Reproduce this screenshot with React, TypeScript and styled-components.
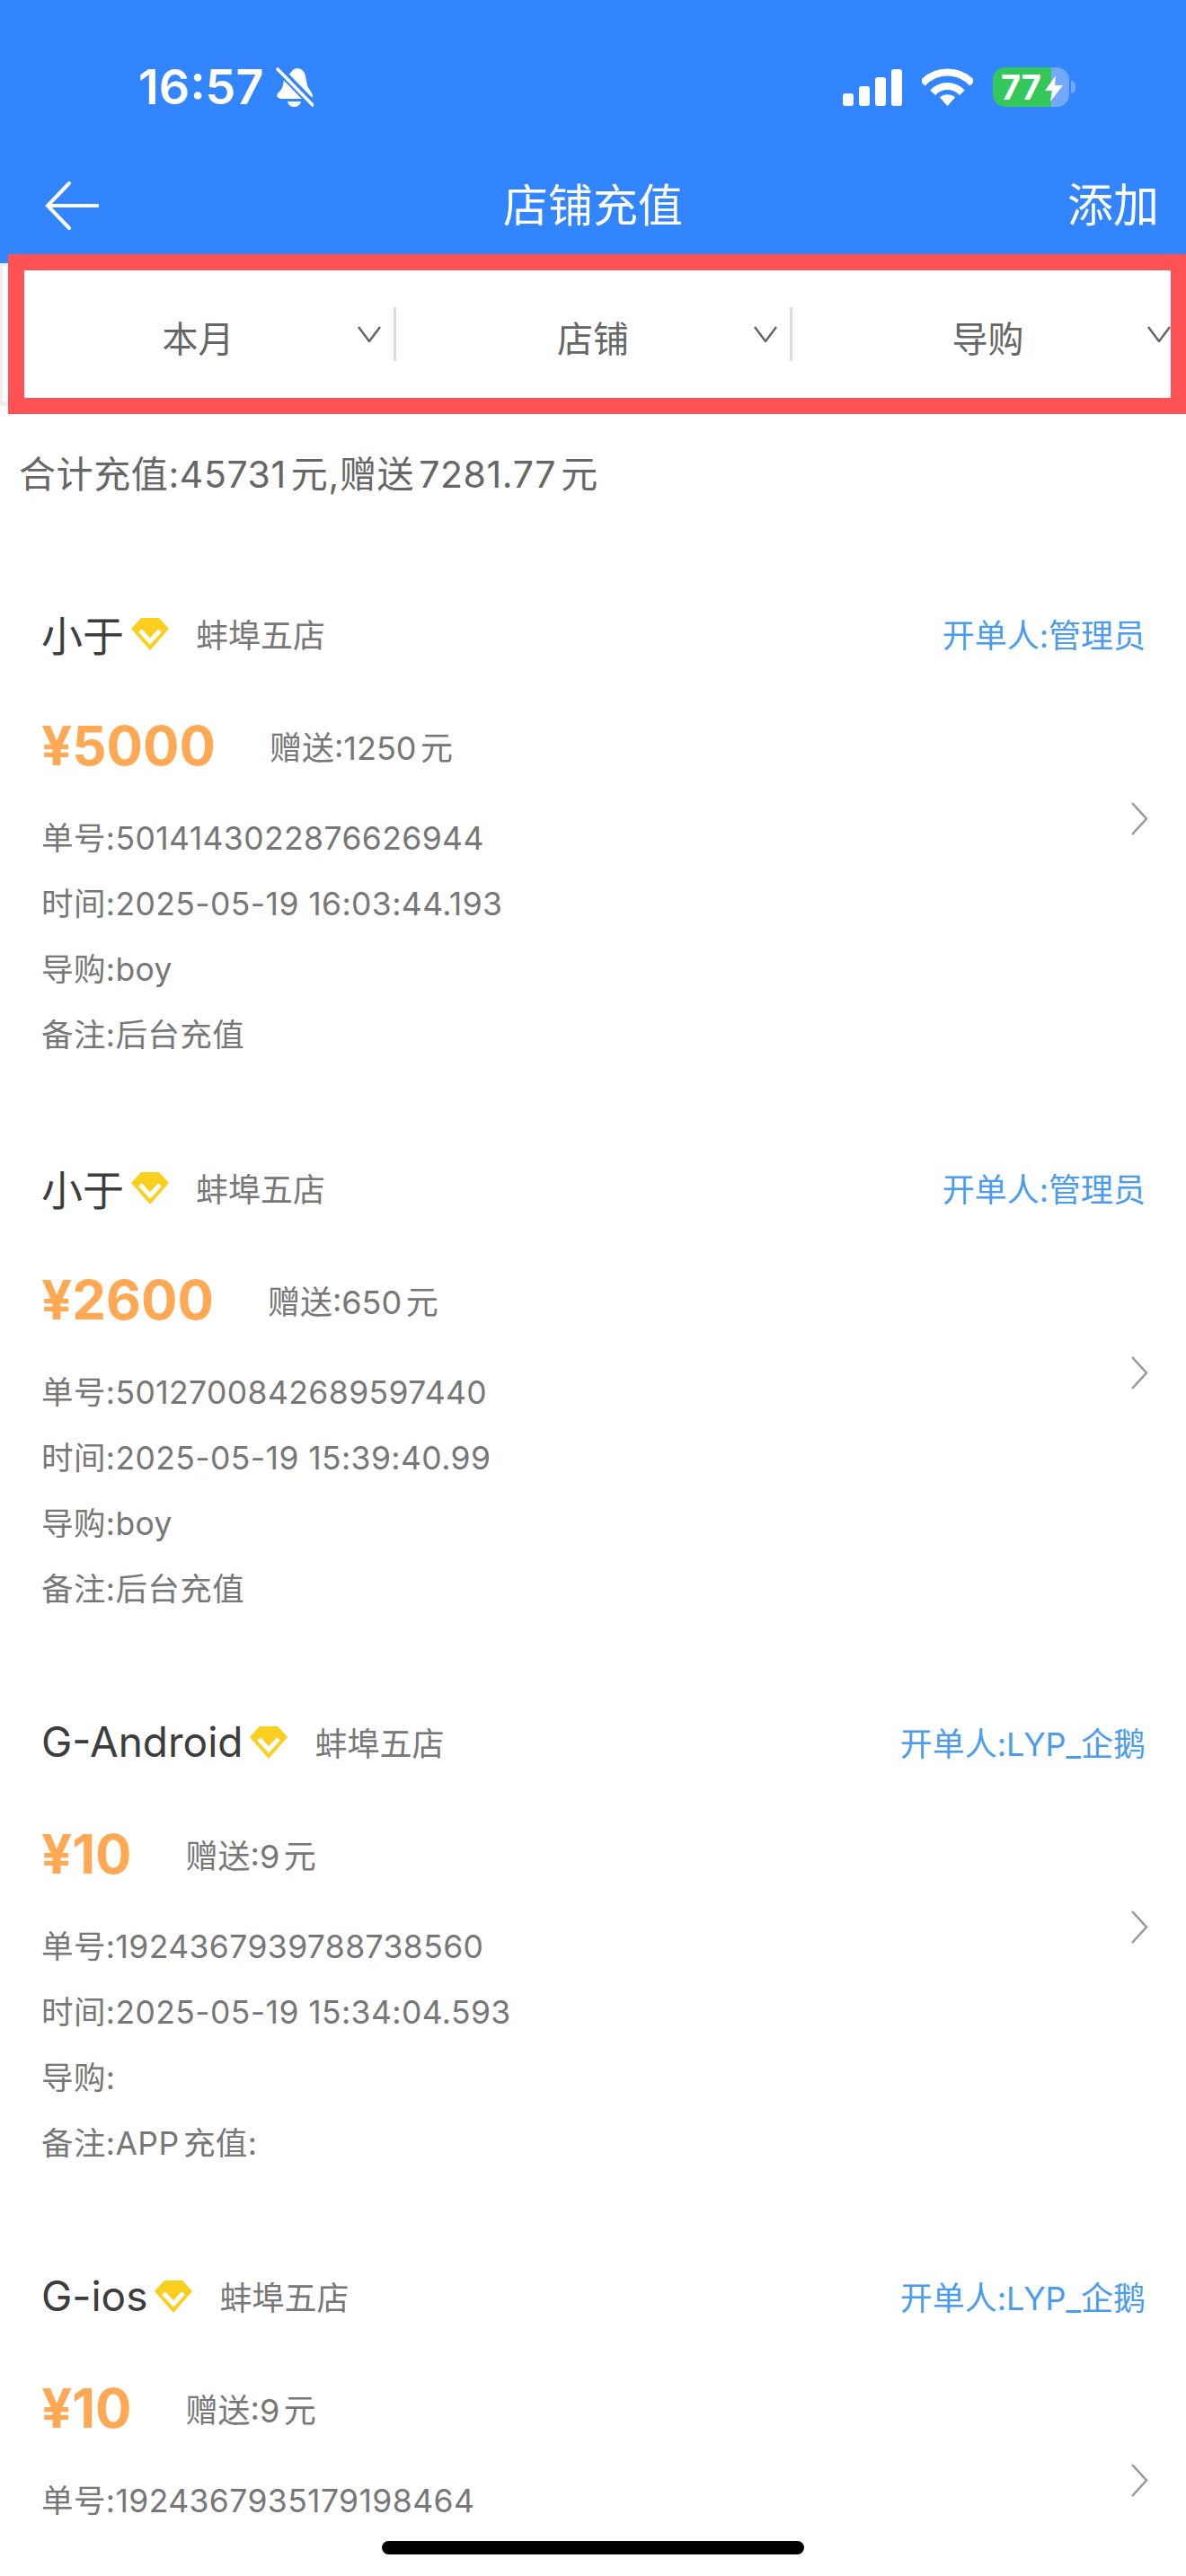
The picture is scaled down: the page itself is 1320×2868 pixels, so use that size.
import React from 'react';
import styled, { createGlobalStyle } from 'styled-components';

const GlobalStyle = createGlobalStyle`
  html, body {
    margin: 0;
    padding: 0;
    background: #fff;
  }
  body {
    font-family: Inter, "Noto Sans CJK SC", sans-serif;
    text-autospace: normal;
  }
`;

const Screen = styled.div`
  position: relative;
  width: 1320px;
  height: 2868px;
  overflow: hidden;
  background: #fff;
`;

const Header = styled.header`
  background: #3385ff;
  color: #fff;
  height: 293px;
`;

const StatusBar = styled.div`
  height: 194px;
  padding: 0 130px 0 154px;
  display: flex;
  align-items: center;
  justify-content: space-between;
`;

const StatusLeft = styled.div`
  display: flex;
  align-items: center;
  gap: 13px;
`;

const Clock = styled.span`
  font-size: 54px;
  font-weight: 600;
  line-height: 60px;
`;

const StatusRight = styled.div`
  display: flex;
  align-items: center;
  gap: 22px;
`;

const Signal = styled.div`
  display: flex;
  align-items: flex-end;
  gap: 6px;
  height: 41px;
`;

const SignalBar = styled.span<{ $h: number }>`
  width: 12px;
  height: ${(p) => p.$h}px;
  border-radius: 3px;
  background: #fff;
`;

const Battery = styled.div`
  position: relative;
  width: 85px;
  height: 44px;
  border-radius: 14px;
  background: linear-gradient(to right, #34c759 76.5%, #73a8ff 76.5%);
  display: flex;
  align-items: center;
  padding-left: 9px;
  box-sizing: border-box;
  font-size: 38px;
  font-weight: 700;
  line-height: 44px;

  &::after {
    content: '';
    position: absolute;
    right: -7px;
    top: 15px;
    width: 5px;
    height: 14px;
    border-radius: 0 5px 5px 0;
    background: #73a8ff;
  }
`;

const BatteryBolt = styled.svg`
  position: absolute;
  left: 58px;
  top: 9px;
`;

const Nav = styled.div`
  height: 70px;
  padding: 0 32px;
  display: grid;
  grid-template-columns: 1fr auto 1fr;
  align-items: center;
`;

const BackButton = styled.svg`
  margin-left: 17px;
  display: block;
`;

const Title = styled.div`
  font-size: 50px;
  line-height: 70px;
`;

const AddButton = styled.div`
  font-size: 51px;
  line-height: 70px;
  justify-self: end;
  margin-right: -2px;
`;

const FilterBar = styled.div`
  position: relative;
  height: 159px;
  box-sizing: border-box;
  border: 3px solid #eee;
  border-bottom-width: 5px;
  display: grid;
  grid-template-columns: 438px 441px 1fr;
  align-items: center;
`;

const HighlightFrame = styled.div`
  position: absolute;
  top: -13px;
  left: 6px;
  right: -3px;
  bottom: -14px;
  border: 18px solid #ff5254;
  border-right-width: 17px;
  box-sizing: border-box;
`;

const FilterCell = styled.div<{ $divider?: boolean }>`
  position: relative;
  height: 60px;
  display: flex;
  align-items: center;
  justify-content: center;
  border-right: ${(p) => (p.$divider ? '3px solid #dcdcdc' : 'none')};
  box-sizing: border-box;
  color: #666;
  font-size: 40px;
  line-height: 60px;
`;

const FilterLabel = styled.span`
  position: relative;
  top: 6px;
`;

const FilterChevron = styled.svg`
  position: absolute;
  right: 14px;
  top: 21px;
`;

const Total = styled.div`
  height: 152px;
  box-sizing: border-box;
  padding: 0 0 6px 21px;
  display: flex;
  align-items: center;
  color: #666;
  font-size: 41px;
  letter-spacing: 0.6px;
`;

const Card = styled.article`
  display: grid;
  height: 617px;
  box-sizing: border-box;
  padding: 71px 45px 33px 46px;
`;

const CardBody = styled.div`
  grid-area: 1 / 1;
`;

const CardArrow = styled.svg`
  grid-area: 1 / 1;
  justify-self: end;
  align-self: center;
  margin: 0 -3px 42px 0;
`;

const NameRow = styled.div`
  display: flex;
  align-items: center;
  height: 60px;
`;

const Name = styled.span`
  color: #3d3d3d;
  font-size: 46px;
`;

const Diamond = styled.svg`
  margin: 2px 0 0 8px;
  flex: none;
`;

const Store = styled.span`
  margin-left: 30px;
  color: #777;
  font-size: 36px;
`;

const Operator = styled.span`
  margin-left: auto;
  color: #4a9cf0;
  font-size: 36px;
`;

const PriceRow = styled.div`
  display: flex;
  align-items: center;
  height: 80px;
  margin-top: 55px;
`;

const Price = styled.span`
  color: #ffa955;
  font-size: 60px;
  font-weight: 700;
`;

const Gift = styled.span`
  margin-left: 60px;
  color: #777;
  font-size: 36px;
`;

const Details = styled.div`
  margin-top: 27px;
`;

const DetailLine = styled.div`
  height: 73px;
  line-height: 73px;
  color: #777;
  font-size: 35.5px;
  letter-spacing: 0.4px;
`;

const HomeIndicator = styled.div`
  position: absolute;
  left: 425px;
  bottom: 24px;
  width: 470px;
  height: 15px;
  border-radius: 8px;
  background: #000;
`;

const records = [
  {
    name: '小于',
    store: '蚌埠五店',
    operator: '开单人:管理员',
    price: '¥5000',
    gift: '赠送:1250元',
    details: ['单号:5014143022876626944', '时间:2025-05-19 16:03:44.193', '导购:boy', '备注:后台充值'],
  },
  {
    name: '小于',
    store: '蚌埠五店',
    operator: '开单人:管理员',
    price: '¥2600',
    gift: '赠送:650元',
    details: ['单号:5012700842689597440', '时间:2025-05-19 15:39:40.99', '导购:boy', '备注:后台充值'],
  },
  {
    name: 'G-Android',
    store: '蚌埠五店',
    operator: '开单人:LYP_企鹅',
    price: '¥10',
    gift: '赠送:9元',
    details: ['单号:1924367939788738560', '时间:2025-05-19 15:34:04.593', '导购:', '备注:APP充值:'],
  },
  {
    name: 'G-ios',
    store: '蚌埠五店',
    operator: '开单人:LYP_企鹅',
    price: '¥10',
    gift: '赠送:9元',
    details: ['单号:1924367935179198464'],
  },
];

const filters = ['本月', '店铺', '导购'];

const DiamondIcon = () => (
  <Diamond width="42" height="36" viewBox="0 0 42 36">
    <path d="M11 0H31L42 12 21 36 0 12Z" fill="#fbcf1f" />
    <path d="M10 14L21 26 32 14" fill="none" stroke="#fff" stroke-width="5" />
  </Diamond>
);

const App = () => (
  <Screen>
    <GlobalStyle />
    <Header>
      <StatusBar>
        <StatusLeft>
          <Clock>16:57</Clock>
          <svg width="42" height="45" viewBox="0 0 42 45">
            <path d="M20 2c6-3 12 1 13 8l2 10c1 4 5 7 6 11 0 3-2 4-5 4H6c-4 0-6-3-4-6 3-3 5-5 6-9l1-6Z" fill="#fff" />
            <path d="M13 38h15c-1 4-4 6-7.500 6S14 42 13 38Z" fill="#fff" />
            <path d="M2 1L42 42" stroke="#3385ff" stroke-width="9" />
            <path d="M2 2L41 42" stroke="#fff" stroke-width="3.500" stroke-linecap="round" />
          </svg>
        </StatusLeft>
        <StatusRight>
          <Signal>
            <SignalBar $h={14} />
            <SignalBar $h={22} />
            <SignalBar $h={32} />
            <SignalBar $h={41} />
          </Signal>
          <svg width="57" height="42" viewBox="0 0 57 42">
            <path d="M.6 16.900A37.500 37.500 0 0 1 56.400 16.900" fill="none" stroke="#fff" stroke-width="8" />
            <path d="M12.200 27.300A22 22 0 0 1 44.800 27.300" fill="none" stroke="#fff" stroke-width="8" />
            <path d="M28.500 42L20 32.500A12.700 12.700 0 0 1 37 32.500Z" fill="#fff" />
          </svg>
          <Battery>
            77
            <BatteryBolt width="20" height="29" viewBox="0 0 20 29">
              <path d="M12 0L0 17h8L6 29 20 11h-9Z" fill="#fff" />
            </BatteryBolt>
          </Battery>
        </StatusRight>
      </StatusBar>
      <Nav>
        <BackButton width="61" height="54" viewBox="0 0 61 54">
          <path d="M28 2L4 27 28 52M4 27H60" fill="none" stroke="#fff" stroke-width="4" stroke-linecap="round" />
        </BackButton>
        <Title>店铺充值</Title>
        <AddButton>添加</AddButton>
      </Nav>
    </Header>
    <FilterBar>
      {filters.map((label, i) => (
        <FilterCell key={label} $divider={i < 2}>
          <FilterLabel>{label}</FilterLabel>
          <FilterChevron width="26" height="18" viewBox="0 0 26 18">
            <path d="M1 1L13 17 25 1" fill="none" stroke="#666" stroke-width="2.500" />
          </FilterChevron>
        </FilterCell>
      ))}
      <HighlightFrame />
    </FilterBar>
    <Total>合计充值:45731元,赠送7281.77元</Total>
    {records.map((r, i) => (
      <Card key={i}>
        <CardBody>
          <NameRow>
            <Name>{r.name}</Name>
            <DiamondIcon />
            <Store>{r.store}</Store>
            <Operator>{r.operator}</Operator>
          </NameRow>
          <PriceRow>
            <Price>{r.price}</Price>
            <Gift>{r.gift}</Gift>
          </PriceRow>
          <Details>
            {r.details.map((d) => (
              <DetailLine key={d}>{d}</DetailLine>
            ))}
          </Details>
        </CardBody>
        <CardArrow width="20" height="37" viewBox="0 0 20 37">
          <path d="M2 1L18 18.500 2 36" fill="none" stroke="#999" stroke-width="2.500" />
        </CardArrow>
      </Card>
    ))}
    <HomeIndicator />
  </Screen>
);

export default App;
